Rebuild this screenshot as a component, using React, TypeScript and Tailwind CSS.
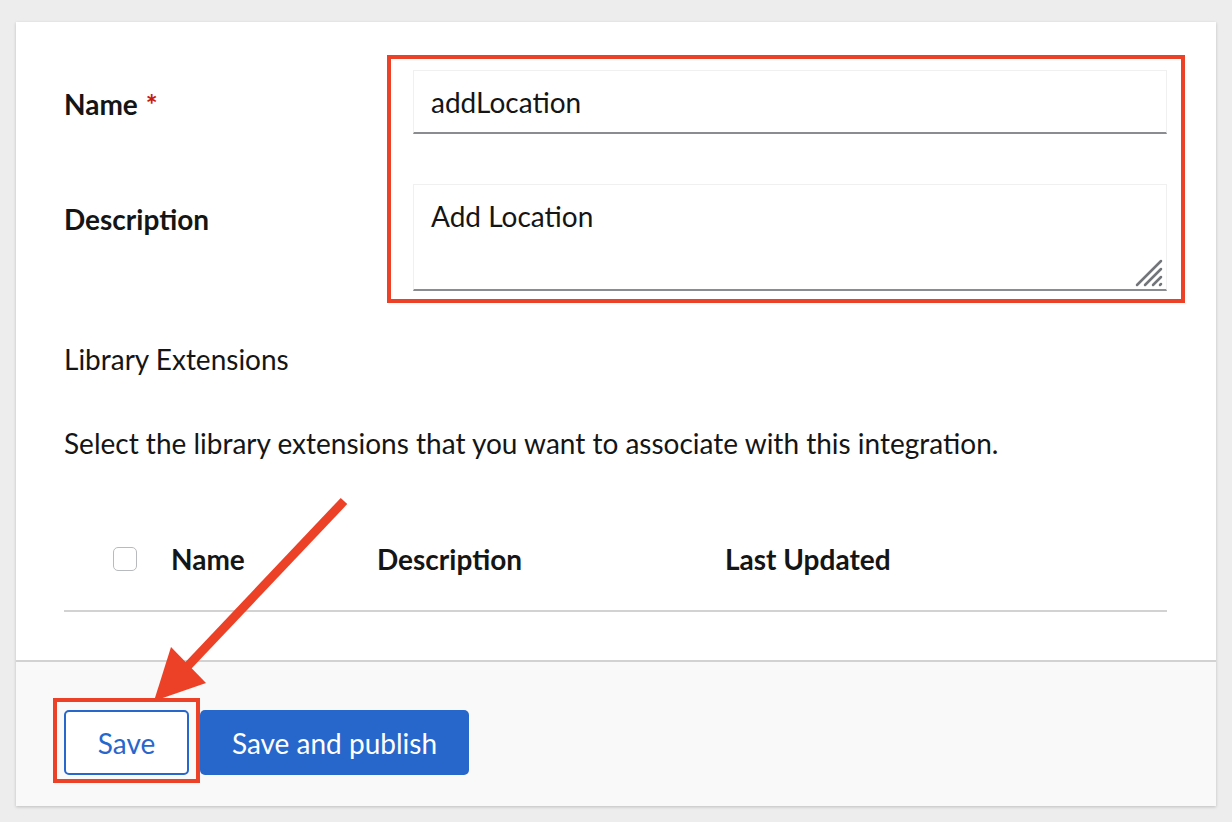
import React from "react";

const font = { fontFamily: '"Lato", "Open Sans", sans-serif' };

function Checkbox() {
  return <span className="block w-6 h-6 rounded-[5px] border border-[#b8bbbe] bg-white" />;
}

function ResizeHandle() {
  return (
    <svg className="absolute right-[3px] bottom-[2px]" width="28" height="28" viewBox="0 0 28 28">
      <g stroke="#72767b" strokeWidth="2.5" strokeLinecap="round">
        <line x1="2" y1="26" x2="26" y2="2" />
        <line x1="10" y1="26" x2="26" y2="10" />
        <line x1="18" y1="26" x2="26" y2="18" />
        <line x1="25" y1="26" x2="26" y2="25" />
      </g>
    </svg>
  );
}

function Annotations() {
  return (
    <>
      <div className="absolute left-[387px] top-[55px] w-[798px] h-[248px] border-[4px] border-[#ec4126] pointer-events-none" />
      <div className="absolute left-[53px] top-[698px] w-[147px] h-[85px] border-[4px] border-[#ec4126] pointer-events-none" />
      <svg className="absolute left-0 top-0 pointer-events-none" width="1232" height="822">
        <line x1="344" y1="501" x2="184" y2="670" stroke="#ec4126" strokeWidth="9" />
        <polygon points="154,701 171,647 206,683" fill="#ec4126" />
      </svg>
    </>
  );
}

export default function App() {
  return (
    <div className="relative w-[1232px] h-[822px] bg-[#ededed] pt-[22px] px-4 text-[#151515]" style={font}>
      <div className="w-[1200px] h-[784px] bg-white shadow-[0_1px_3px_rgba(0,0,0,0.2)] flex flex-col">
        <div className="flex-1 pl-12 pr-[49px] pt-12">
          <div className="grid grid-cols-[349px_1fr] gap-y-[50px] items-start text-[28px] leading-[34px]">
            <div className="h-16 flex items-center font-bold pt-[3px]">
              Name <span className="ml-2 text-[#c9190b]">*</span>
            </div>
            <div className="h-16 border border-[#f0f0f0] border-b-2 border-b-[#8a8d90] flex items-center px-[17px]">
              addLocation
            </div>
            <div className="h-[70px] flex items-center font-bold">Description</div>
            <div className="relative h-[107px] border border-[#f0f0f0] border-b-2 border-b-[#8a8d90] px-[17px] pt-[14px]">
              Add Location
              <ResizeHandle />
            </div>
          </div>
          <div className="mt-[51px] text-[28px] leading-[34px]">Library Extensions</div>
          <div className="mt-[50px] text-[28px] leading-[34px]">
            Select the library extensions that you want to associate with this integration.
          </div>
          <div className="mt-[65px] h-[87px] border-b-2 border-[#d2d2d2] flex items-center text-[28px] font-bold pb-[18px]">
            <div className="w-[107px] pl-[49px]">
              <Checkbox />
            </div>
            <div className="w-[206px]">Name</div>
            <div className="w-[348px]">Description</div>
            <div>Last Updated</div>
          </div>
        </div>
        <div className="h-[146px] border-t-2 border-[#d2d2d2] bg-[#f9f9f9] pl-12 pt-[48px] flex items-start gap-[11px]">
          <button className="w-[125px] h-[65px] rounded-[5px] border-2 border-[#2767cc] bg-white text-[#2767cc] text-[28px]">
            Save
          </button>
          <button className="w-[269px] h-[65px] rounded-[5px] bg-[#2767cc] text-white text-[28px]">
            Save and publish
          </button>
        </div>
      </div>
      <Annotations />
    </div>
  );
}
